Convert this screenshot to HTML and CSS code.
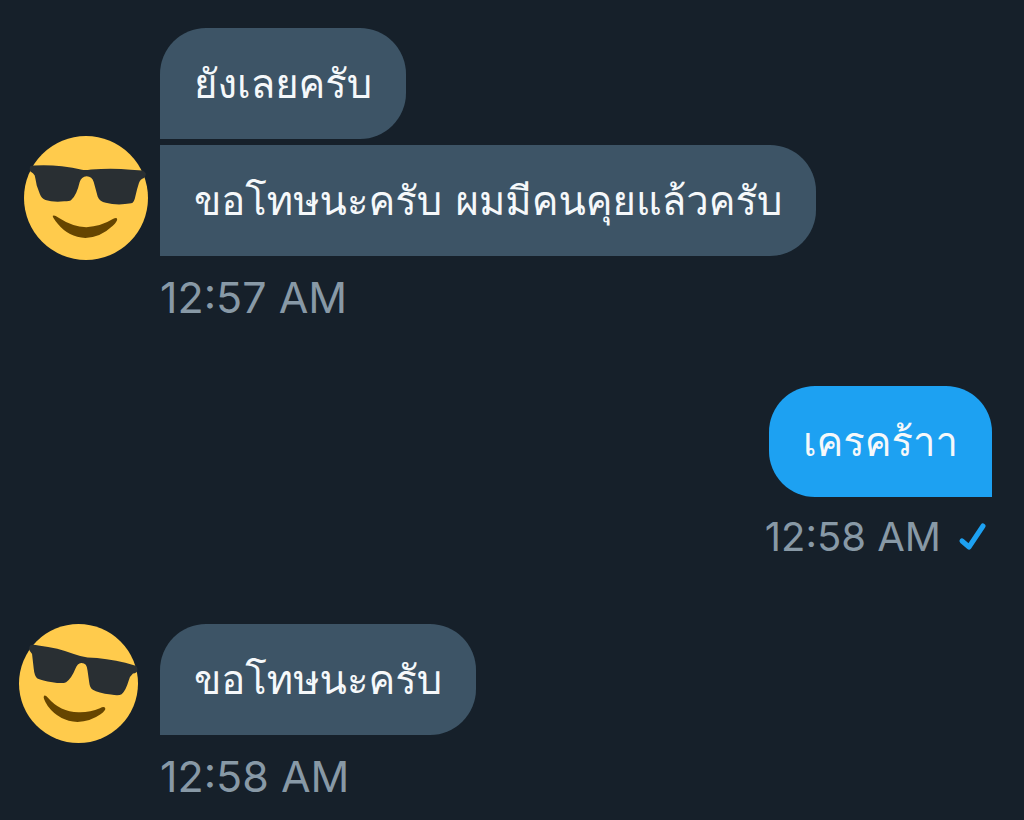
FILE: index.html
```html
<!DOCTYPE html>
<html lang="th">
<head>
  <meta charset="UTF-8">
  <meta name="viewport" content="width=device-width, initial-scale=1">
  <title>Messages</title>
  <link rel="stylesheet" href="styles.css">
</head>
<body>
  <main class="chat">
    <section class="message received">
      <svg class="avatar" viewBox="42 50 370 370" aria-hidden="true">
        <circle class="face" cx="227" cy="235" r="185"/>
        <path class="glasses" d="M60 141 Q63 138 72 138 Q115 136 155 140 Q188 144 215 151 Q225 153 242 150 Q310 145 360 151 L395 153 Q403 155 406 163 Q405 173 400 175 Q389 178 385 190 Q379 208 374 231 Q371 248 362 251 Q318 258 286 249 Q268 246 262 231 L250 187 Q245 171 229 170 Q213 171 208 188 Q199 228 182 242 Q178 245 162 245 Q128 248 106 241 Q94 236 89 222 L80 198 Q76 176 74 168 Q70 160 61 156 Q57 151 60 141 Z"/>
        <path class="smile" d="M128 288 Q133 285 144 293 Q187 321 228 322 Q272 320 307 298 Q319 292 320 298 Q321 305 307 318 Q269 354 225 354 Q175 352 142 311 Q126 292 128 288 Z"/>
      </svg>
      <div class="bubbles">
        <p class="bubble">ยังเลยครับ</p>
        <p class="bubble joined">ขอโทษนะครับ ผมมีคนคุยแล้วครับ</p>
      </div>
      <time class="time">12:57 AM</time>
    </section>

    <section class="message sent">
      <div class="bubbles">
        <p class="bubble">เครคร้าา</p>
      </div>
      <div class="status">
        <time class="time">12:58 AM</time>
        <svg class="check" viewBox="0 0 30 30" aria-hidden="true">
          <path d="M4 19 L11 25 L25 4"/>
        </svg>
      </div>
    </section>

    <section class="message received">
      <svg class="avatar tilted" viewBox="27 41 356 356" aria-hidden="true">
        <circle class="face" cx="205" cy="219" r="178"/>
        <path class="glasses" d="M62 104 Q70 101 85 105 Q145 112 191 131 Q212 139 232 141 Q290 143 345 157 L376 166 Q383 170 381 181 Q380 188 368 189 Q359 196 355 211 Q346 242 334 251 Q326 256 302 252 Q263 248 248 238 Q239 233 237 215 L232 180 Q230 157 213 158 Q202 159 196 174 Q184 204 168 215 Q157 220 127 215 Q96 211 82 204 Q73 197 71 174 L67 139 Q68 130 59 121 Q55 111 62 104 Z"/>
        <path class="smile" d="M102 256 Q106 251 115 263 Q149 303 205 305 Q239 306 269 293 Q282 286 285 293 Q287 299 271 311 Q240 333 202 334 Q147 331 113 286 Q97 263 102 256 Z"/>
      </svg>
      <div class="bubbles">
        <p class="bubble">ขอโทษนะครับ</p>
      </div>
      <time class="time">12:58 AM</time>
    </section>
  </main>
</body>
</html>
```

FILE: styles.css
```css
* {
  box-sizing: border-box;
}

body {
  margin: 0;
  background: #16202a;
  color: #f5f8fa;
  font-family: Loma, Garuda, "Noto Sans Thai Looped", "Noto Sans", sans-serif;
}

.chat {
  display: flex;
  flex-direction: column;
  gap: 64px;
  padding: 28px 32px 0 160px;
}

.message {
  display: flex;
  flex-direction: column;
  row-gap: 16px;
}

.received {
  display: grid;
  grid-template-columns: 160px 1fr;
  margin-left: -160px;
}

.received .time {
  grid-column: 2;
}

.sent {
  align-items: flex-end;
}

.avatar {
  width: 124px;
  height: 124px;
  margin: 0 0 -4px 24px;
  align-self: end;
}

.avatar.tilted {
  width: 119px;
  height: 119px;
  margin: 0 0 -8px 19px;
}

.face {
  fill: #ffcb4c;
}

.glasses {
  fill: #292f33;
}

.smile {
  fill: #664500;
}

.bubbles {
  display: flex;
  flex-direction: column;
  align-items: flex-start;
  gap: 6px;
}

.bubble {
  margin: 0;
  padding: 26px 34px 25px;
  border-radius: 46px 46px 46px 0;
  background: #3d5466;
  font-size: 40px;
  line-height: 60px;
}

.bubble.joined {
  border-top-left-radius: 0;
}

.sent .bubble {
  border-radius: 46px 46px 0 46px;
  background: #1da1f2;
}

.time {
  color: #8899a6;
  font-family: Inter, sans-serif;
  font-size: 43px;
  line-height: 50px;
}

.status {
  display: flex;
  align-items: center;
  gap: 17px;
  padding-right: 4px;
}

.status .time {
  font-size: 40px;
  line-height: 47px;
}

.check {
  width: 30px;
  height: 30px;
  fill: none;
  stroke: #1da1f2;
  stroke-width: 5;
  stroke-linecap: round;
  stroke-linejoin: round;
}
```
